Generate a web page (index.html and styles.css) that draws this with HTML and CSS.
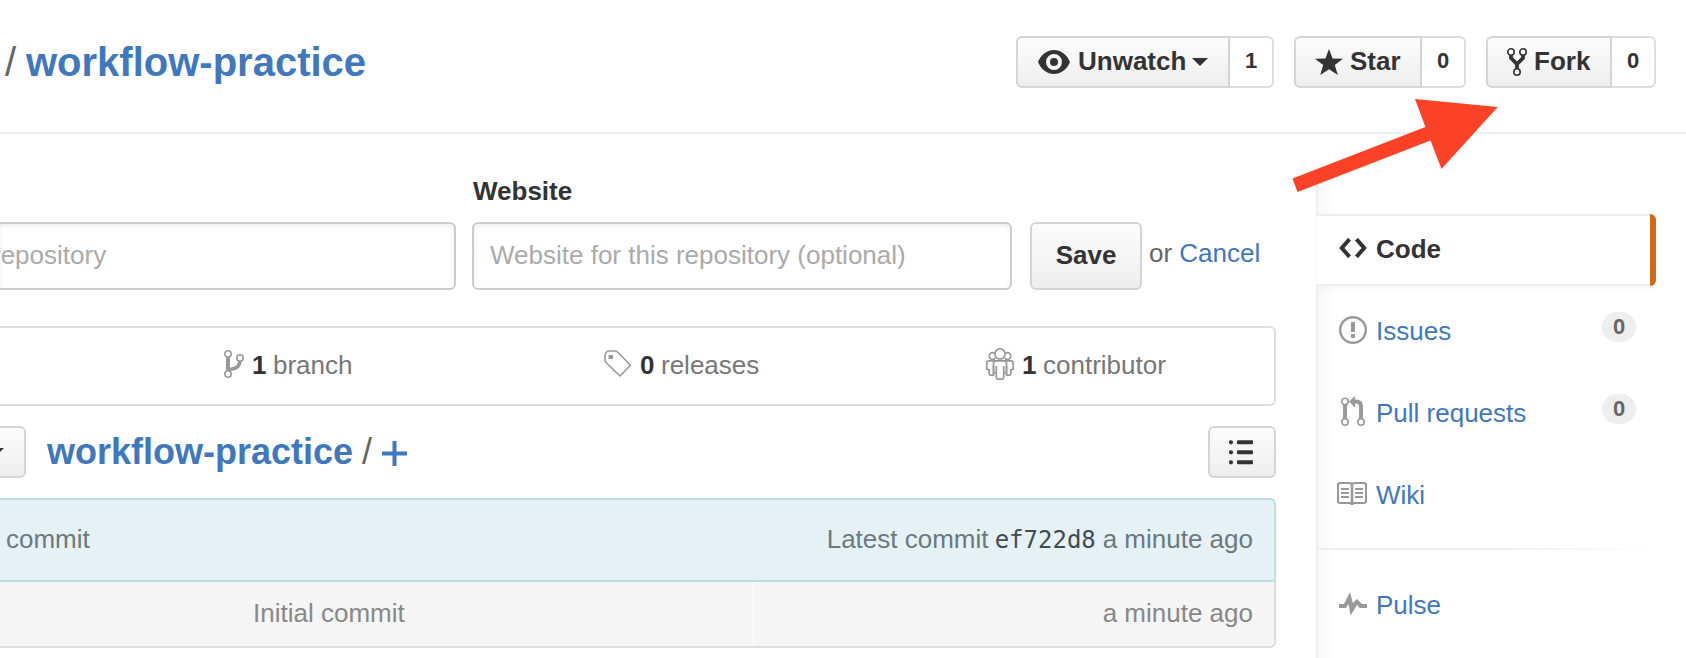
FILE: index.html
```html
<!DOCTYPE html>
<html lang="en">
<head>
<meta charset="utf-8">
<title>workflow-practice</title>
<link rel="stylesheet" href="styles.css">
</head>
<body>
<header class="pagehead">
  <h1 class="repo-title"><span class="slash">/</span><a class="repo-name">workflow-practice</a></h1>
  <div class="social">
    <div class="group watch">
      <a class="btn"><svg class="icon" width="32" height="24" viewBox="0 0 32 24"><path fill="#333" fill-rule="evenodd" d="M16 0C8 0 2.500 6 0 12c2.500 6 8 12 16 12s13.500-6 16-12C29.500 6 24 0 16 0zm0 20a8 8 0 1 1 0-16 8 8 0 0 1 0 16z"/><circle cx="16" cy="12" r="4" fill="#333"/></svg><span class="label">Unwatch</span><i class="caret"></i></a>
      <a class="count">1</a>
    </div>
    <div class="group star">
      <a class="btn"><svg class="icon" width="28" height="26" viewBox="0 0 28 26"><path fill="#333" d="M14 0l3.600 9.400 10.400.4-8.200 6.300L22.800 26 14 20.300 5.200 26l3-9.900L0 9.800l10.400-.4z"/></svg><span class="label">Star</span></a>
      <a class="count">0</a>
    </div>
    <div class="group fork">
      <a class="btn"><svg class="icon" width="20" height="28" viewBox="0 0 20 28" fill="none" stroke="#333"><path stroke-width="3.800" d="M4 7v3l6 6 6-6V7M10 15v6"/><g fill="#fff" stroke-width="1.600"><circle cx="4" cy="4" r="3.200"/><circle cx="16" cy="4" r="3.200"/><circle cx="10" cy="24" r="3.200"/></g></svg><span class="label">Fork</span></a>
      <a class="count">0</a>
    </div>
  </div>
</header>

<div class="columns">
  <main class="main">
    <div class="edit">
      <div class="field first"><div class="input"><span>repository</span></div></div>
      <div class="field website"><label>Website</label><div class="input"><span>Website for this repository (optional)</span></div></div>
      <a class="btn save">Save</a>
      <div class="cancel">or <a>Cancel</a></div>
    </div>

    <div class="summary">
      <div class="stat branches"><svg width="20" height="28" viewBox="0 0 20 28" fill="none" stroke="#999"><path stroke-width="4" d="M4 7v14"/><path stroke-width="3.600" d="M16 11c-.5 5.500-4 7.500-8 8-2 .3-4 1-4 2"/><g fill="#fff" stroke-width="1.600"><circle cx="4" cy="4" r="3.200"/><circle cx="16" cy="8" r="3.200"/><circle cx="4" cy="24" r="3.200"/></g></svg><b>1</b><span>branch</span></div>
      <div class="stat releases"><svg width="28" height="28" viewBox="0 0 28 28"><path fill="none" stroke="#999" stroke-width="1.600" stroke-linejoin="round" d="M1 6q0-5 5-5h5q1.500 0 2.500 1L26.500 15.200 16 26 2 12.500Q1 11.500 1 10z"/><path fill="#999" d="M4.500 5H9v4H4.500z"/></svg><b>0</b><span>releases</span></div>
      <div class="stat people"><svg width="28" height="32" viewBox="0 0 28 32" fill="none" stroke="#999" stroke-width="1.700" stroke-linejoin="round"><path d="M9.200 10A3.300 3.300 0 1 1 9 5.800M18.800 10A3.300 3.300 0 1 0 19 5.800"/><circle cx="14" cy="6" r="5.100"/><path d="M10 12.800H3q-2.200 0-2.200 2.200v6.500h2.400V26q0 1.200 1.200 1.200H7.500V18M18 12.800h7q2.200 0 2.200 2.200v6.500h-2.400V26q0 1.200-1.200 1.200H20.500V18"/><path d="M10 12.800h8q2.500 0 2.500 2.500V25H17.700v4.800q0 1.300-1.300 1.300h-4.800q-1.300 0-1.300-1.300V25H7.500V15.300q0-2.500 2.500-2.500zM10.300 18v8M17.700 18v8"/></svg><b>1</b><span>contributor</span></div>
    </div>

    <div class="filenav">
      <a class="btn branch-menu"><i class="caret"></i></a>
      <h2 class="crumb"><a class="crumb-name">workflow-practice</a><span class="slash">/</span><svg width="25" height="25" viewBox="0 0 25 25"><path fill="#4078c0" d="M10.500 0h4v10.500H25v4H14.500V25h-4V14.500H0v-4h10.500z"/></svg></h2>
      <a class="btn list"><svg width="24" height="25" viewBox="0 0 24 25" fill="#333"><circle cx="2" cy="2.300" r="2.100"/><circle cx="2" cy="12.300" r="2.100"/><circle cx="2" cy="22.300" r="2.100"/><rect x="8" y=".3" width="16" height="4" rx="1"/><rect x="8" y="10.300" width="16" height="4" rx="1"/><rect x="8" y="20.300" width="16" height="4" rx="1"/></svg></a>
    </div>

    <div class="tease"><span class="tease-left">commit</span><span class="tease-right"><span class="latest">Latest commit</span><code>ef722d8</code><span class="ago">a minute ago</span></span></div>
    <div class="row"><div class="message">Initial commit</div><div class="age"><span class="ago">a minute ago</span></div></div>
  </main>

  <nav class="sidebar">
    <a class="item selected"><svg width="28" height="20" viewBox="0 0 28 20"><path fill="none" stroke="#333" stroke-width="4" d="M10.500 1.200L2.800 10l7.700 8.800M17.500 1.200L25.200 10l-7.700 8.800"/></svg><span class="name">Code</span></a>
    <a class="item"><svg width="28" height="28" viewBox="0 0 28 28"><circle cx="14" cy="14" r="12.800" fill="none" stroke="#999" stroke-width="2.400"/><path fill="#999" d="M12 6h4v10h-4zM12 18h4v4h-4z"/></svg><span class="name">Issues</span><span class="badge">0</span></a>
    <a class="item"><svg class="pr" width="24" height="30" viewBox="0 0 24 30" fill="none" stroke="#999"><path stroke-width="4" d="M4 8v15M20 23V10q0-4.500-5-4.500h-2"/><path fill="#999" stroke="none" d="M8 5.500L14 0v11.500z"/><g fill="#fff" stroke-width="1.600"><circle cx="4" cy="5.500" r="3.200"/><circle cx="4" cy="26" r="3.200"/><circle cx="20" cy="26" r="3.200"/></g></svg><span class="name">Pull requests</span><span class="badge">0</span></a>
    <a class="item wiki"><svg width="30" height="24" viewBox="0 0 30 24" fill="none" stroke="#999"><path stroke-width="2" d="M15 3q-.5-2-2.500-2H3Q1 1 1 3v16q0 2 2 2h9.500q2.500 0 2.500 2 0-2 2.500-2H27q2 0 2-2V3q0-2-2-2h-9.500Q15.500 1 15 3zM4 7h8M4 11h8M4 15h8M18 7h8M18 11h8M18 15h8"/><path stroke-width="2.600" d="M15 3v20"/></svg><span class="name">Wiki</span></a>
    <div class="divider"></div>
    <a class="item pulse"><svg width="28" height="24" viewBox="0 0 28 24"><path fill="#999" d="M0 12h5L11 0l2.800 11L18 7l5 5h5v4h-7l-3-3-6.500 10.500L9.500 12 7 16H0z"/></svg><span class="name">Pulse</span></a>
  </nav>
</div>
<svg class="arrow" width="206" height="94" viewBox="0 0 206 94"><path fill="#fc4226" d="M205.700 8L123 0l10.400 28L.5 79.500l5 13.500 133-51.500L149.500 70z"/></svg>
</body>
</html>
```

FILE: styles.css
```css
* { box-sizing: border-box; }
body { margin: 0; width: 1686px; height: 658px; overflow: hidden; position: relative; background: #fff; color: #666; font: 26px/30px "Liberation Sans", Arial, sans-serif; }
h1, h2 { margin: 0; font-weight: 400; }
svg { flex: none; display: block; }
span, a, b, code, label { white-space: nowrap; }
a { color: #4078c0; }
b { color: #333; }

.pagehead { display: flex; justify-content: space-between; height: 134px; padding: 36px 30px 0 5px; border-bottom: 2px solid #eee; }
.repo-title { display: flex; font-size: 40px; line-height: 52px; }
.slash { display: block; }
.repo-title .slash { width: 21px; }
.repo-name, .crumb-name { font-weight: 700; }
.social { display: flex; gap: 20px; }
.group { display: flex; }
.btn { display: flex; height: 52px; border: 2px solid #d5d5d5; border-radius: 6px; background: linear-gradient(#fcfcfc, #eee); color: #333; font-weight: 700; }
.group .btn { align-items: center; border-radius: 6px 0 0 6px; padding-left: 20px; }
.label { position: relative; top: -1px; }
.count { width: 44px; height: 52px; border: 2px solid #ddd; border-left: 0; border-radius: 0 6px 6px 0; color: #333; font-size: 22px; line-height: 45px; font-weight: 700; text-align: center; }
.watch .btn { width: 214px; }
.watch .label { width: 114px; margin-left: 8px; }
.star .btn { width: 128px; padding-left: 19px; }
.star .label { margin-left: 7px; }
.fork .btn { width: 126px; padding-left: 19px; }
.fork .label { margin-left: 7px; }
.caret { width: 0; height: 0; border: 8px solid transparent; border-top-color: #333; border-bottom: 0; }

.columns { display: flex; justify-content: space-between; padding-right: 30px; height: 524px; }
.main { width: 1276px; padding-top: 42px; }
.edit { display: flex; align-items: flex-end; height: 114px; }
.input { height: 68px; border: 2px solid #ccc; border-radius: 6px; box-shadow: inset 0 2px 4px rgba(0, 0, 0, .075); color: #aaa; line-height: 62px; padding-left: 16px; }
.first { width: 456px; }
.first .input { border-left: 0; border-radius: 0 6px 6px 0; padding: 0; overflow: hidden; }
.first span { display: block; margin-left: -8px; }
.website { width: 540px; margin: 0 18px 0 16px; }
label { display: block; height: 46px; padding-left: 1px; color: #333; font-weight: 700; }
.save { width: 112px; height: 68px; justify-content: center; line-height: 62px; }
.cancel { height: 52px; margin-left: 7px; }

.summary { display: flex; height: 80px; margin-top: 36px; border: 2px solid #ddd; border-left: 0; border-radius: 0 6px 6px 0; }
.stat { display: flex; align-items: center; color: #777; }
.stat b { width: 21px; margin-left: 8px; }
.stat svg { margin-top: -4px; }
.stat b, .stat span { margin-top: -2px; }
.branches { padding-left: 224px; width: 604px; }
.releases { width: 382px; }

.filenav { display: flex; height: 92px; padding-top: 20px; }
.branch-menu { width: 26px; border-left: 0; border-radius: 0 6px 6px 0; }
.branch-menu .caret { margin: 20px 0 0 -12px; }
.crumb { display: flex; width: 1161px; margin-left: 21px; font-size: 36px; line-height: 51px; }
.crumb-name { width: 315px; }
.crumb .slash { width: 20px; }
.crumb svg { margin-top: 15px; }
.list { width: 68px; padding: 12px 0 0 19px; }

.tease { display: flex; justify-content: space-between; height: 84px; padding: 24px 21px 0 6px; border: 2px solid #c0dce9; border-left: 0; border-radius: 0 6px 0 0; background: #e6f1f6; color: #6a7a80; }
.tease-right { display: flex; }
.latest { width: 168px; }
code { width: 108px; color: #404c52; font: 24px/33px "DejaVu Sans Mono", monospace; }
.row { display: flex; height: 66px; border: 2px solid #ddd; border-width: 0 2px 2px 0; border-radius: 0 0 6px 0; background: #f5f5f5; color: #888; line-height: 62px; }
.message { width: 754px; padding-left: 253px; border-right: 1px solid #fff; }
.age { flex: 1; padding-right: 21px; text-align: right; }

.sidebar { width: 340px; margin-top: 42px; padding-top: 38px; border-left: 2px solid #eee; background: linear-gradient(90deg, #f8f8f8, #fff 18px); }
.item { display: flex; position: relative; height: 82px; padding: 28px 20px 0 21px; }
.item svg { margin-right: 9px; }
.selected { height: 72px; margin-left: -2px; padding: 17px 0 0 23px; border: 2px solid #eee; border-width: 2px 0; border-radius: 0 6px 6px 0; background: #fff; color: #333; font-weight: 700; box-shadow: 0 3px 6px rgba(0, 0, 0, .03); }
.selected::after { content: ""; position: absolute; top: -2px; right: 0; width: 6px; height: 72px; border-radius: 0 6px 6px 0; background: #d26911; }
.selected svg { margin-top: 5px; }
.selected .name { line-height: 32px; }
.selected + .item { height: 84px; padding-top: 30px; }
.item .pr { margin: -2px 11px 0 2px; }
.badge { width: 34px; height: 30px; margin: -4px 0 0 auto; border-radius: 15px; background: #eee; color: #666; font-size: 22px; line-height: 29px; font-weight: 700; text-align: center; }
.wiki { height: 96px; padding-left: 19px; }
.wiki svg { margin-top: 2px; }
.divider { height: 2px; background: linear-gradient(90deg, #eee 50%, rgba(238, 238, 238, 0)); }
.pulse { padding-top: 40px; }
.pulse svg { margin-top: 2px; }

.arrow { position: absolute; left: 1292px; top: 99px; }
```
